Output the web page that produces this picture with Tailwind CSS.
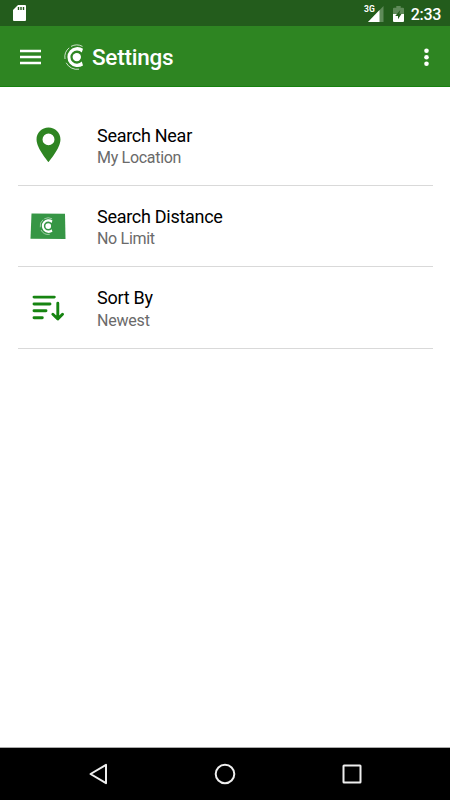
<!DOCTYPE html>
<html lang="en">
<head>
<meta charset="utf-8">
<title>Settings</title>
<script src="https://cdn.jsdelivr.net/npm/@tailwindcss/browser@4"></script>
</head>
<body class="flex h-[800px] w-[450px] flex-col overflow-hidden bg-white font-[Roboto,sans-serif]">
<svg class="hidden">
  <symbol id="logo" viewBox="0 0 22 26">
    <path d="M19 4.8A10 10 0 1 0 19 21.4L17.8 17.6A6.6 6.6 0 1 1 17.8 8.6Z" fill="currentColor"/>
    <circle cx="12.8" cy="13.1" r="4.2" fill="currentColor"/>
    <path d="M18.5 2.4A12.2 12.2 0 0 0 7 2.4M5.2 3.8A12 12 0 0 0 1 15M2.2 18.8A12.2 12.2 0 0 0 15 25.2" fill="none" stroke="currentColor" stroke-width=".9" stroke-opacity=".85"/>
  </symbol>
</svg>

<div class="flex h-[26px] shrink-0 items-center bg-[#235c1c] pl-[13px] pr-[9px] text-white">
  <svg class="h-[16px] w-[13px]" viewBox="0 0 13 16"><path d="M5 0H12Q13 0 13 1V15Q13 16 12 16H1Q0 16 0 15V5Z" fill="#fff"/><path d="M5.5 2V5M8 2V5M10.5 2V5" stroke="#235c1c" stroke-width="1.4"/></svg>
  <div class="ml-auto flex h-full items-center">
    <span class="mr-[-7px] mb-[7px] text-[8.5px] leading-none font-bold">3G</span>
    <svg class="mb-[-1px] h-[16px] w-[16px]" viewBox="0 0 16 16"><path d="M15.5 0V16H0Z" fill="#5f8a59"/><path d="M11.5 4V16H0Z" fill="#fff"/></svg>
    <svg class="ml-[9px] mb-[-1px] h-[16px] w-[11px]" viewBox="0 0 11 16"><path d="M3.3 0H7.7V1.8H10Q11 1.8 11 2.8V8H0V2.8Q0 1.8 1 1.8H3.3Z" fill="#5f8a59"/><path d="M0 8H11V15Q11 16 10 16H1Q0 16 0 15Z" fill="#fff"/><path d="M7.3 4L2.2 10H5V13.2L8.6 7.8H6.3Z" fill="#235c1c"/></svg>
    <span class="ml-[7px] mt-[3px] text-[16px] leading-none font-medium tracking-[-0.3px]">2:33</span>
  </div>
</div>

<header class="flex h-[61px] shrink-0 items-center border-b border-[#16810f] bg-[#2e8522] pl-[20px] pr-[21px] text-white">
  <svg class="mt-[1px] h-[16px] w-[21px]" viewBox="0 0 21 16"><path d="M0 2H21M0 8H21M0 14H21" stroke="#fff" stroke-width="2.4"/></svg>
  <svg class="mt-[1px] ml-[23px] h-[26px] w-[22px]"><use href="#logo"/></svg>
  <h1 class="ml-[6px] mt-[3px] text-[22.5px] leading-none font-medium tracking-[-0.25px]">Settings</h1>
  <svg class="mt-[1px] ml-auto h-[20px] w-[5px]" viewBox="0 0 5 20"><g fill="#fff"><circle cx="2.5" cy="3.7" r="2.3"/><circle cx="2.5" cy="10.2" r="2.3"/><circle cx="2.5" cy="16.7" r="2.3"/></g></svg>
</header>

<main class="flex-1 pl-[18px] pr-[17px] pt-[17px]">
  <section class="flex h-[82px] items-center border-b border-[#d9d9d9]">
    <div class="flex w-[60px] justify-center"><svg class="h-[41px] w-[41px]" viewBox="0 0 24 24"><path d="M12 2C8.1 2 5 5.1 5 9c0 5.2 7 13.2 7 13.2S19 14.2 19 9C19 5.1 15.9 2 12 2Zm0 10.5a3.5 3.5 0 1 1 0-7 3.5 3.5 0 0 1 0 7Z" fill="#2e8522"/></svg></div>
    <div class="pl-[19px] pt-[3px]">
      <h2 class="text-[18px] leading-[23px] tracking-[-0.28px] text-black">Search Near</h2>
      <p class="text-[16px] leading-[22px] tracking-[-0.3px] text-[#6a6a6a]">My Location</p>
    </div>
  </section>
  <section class="flex h-[81px] items-center border-b border-[#d9d9d9]">
    <div class="flex w-[60px] justify-center"><svg class="h-[27px] w-[36px] text-white" viewBox="0 0 36 27"><path d="M1.5 .5L35 .8L35.5 26L.5 25.7Z" fill="#369645"/><use href="#logo" x="9.5" y="4" width="15" height="18"/></svg></div>
    <div class="pl-[19px] pt-[2px]">
      <h2 class="text-[18px] leading-[23px] tracking-[-0.28px] text-black">Search Distance</h2>
      <p class="text-[16px] leading-[22px] tracking-[-0.3px] text-[#6a6a6a]">No Limit</p>
    </div>
  </section>
  <section class="flex h-[82px] items-center border-b border-[#d9d9d9]">
    <div class="flex w-[60px] justify-center"><svg class="h-[26px] w-[32px]" viewBox="0 0 32 26"><path d="M2 2.1H22.3M2 9H18M2 15.8H14M2 22.8H10.3M25.8 8.3V23.6M20.9 19.3L25.8 24L30.5 19.3" fill="none" stroke="#168411" stroke-width="2.9" stroke-linecap="round" stroke-linejoin="round"/></svg></div>
    <div class="pl-[19px] pt-[2px]">
      <h2 class="text-[18px] leading-[23px] tracking-[-0.28px] text-black">Sort By</h2>
      <p class="text-[16px] leading-[23px] tracking-[-0.2px] text-[#6a6a6a]">Newest</p>
    </div>
  </section>
</main>

<nav class="flex h-[53px] shrink-0 items-center justify-between border-t border-[#aaa] bg-black pl-[89px] pr-[88px]">
  <svg class="h-[22px] w-[19px]" viewBox="0 0 19 22"><path d="M17 1.8V20.2L1.5 11Z" fill="none" stroke="#eee" stroke-width="2" stroke-linejoin="round"/></svg>
  <svg class="h-[22px] w-[22px]" viewBox="0 0 22 22"><circle cx="11" cy="11" r="9.3" fill="none" stroke="#eee" stroke-width="2"/></svg>
  <svg class="h-[20px] w-[20px]" viewBox="0 0 20 20"><rect x="1.5" y="1.5" width="17" height="17" rx=".5" fill="none" stroke="#eee" stroke-width="2"/></svg>
</nav>
</body>
</html>
